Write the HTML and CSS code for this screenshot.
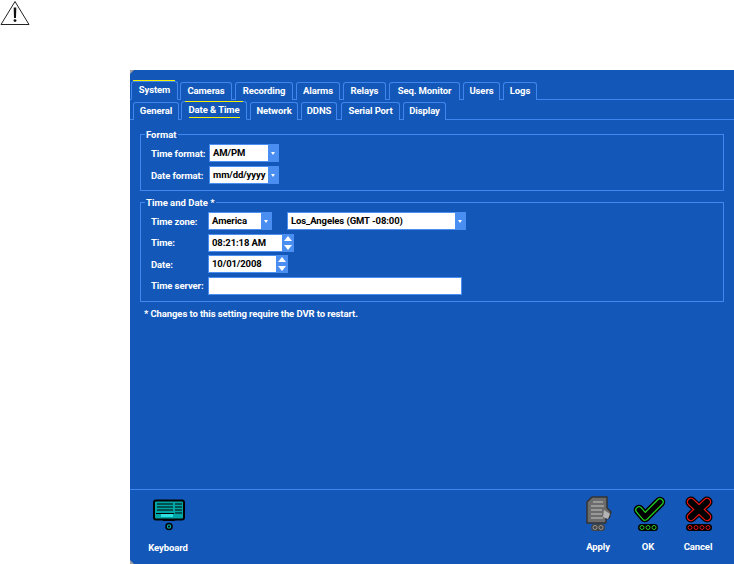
FILE: index.html
```html
<!DOCTYPE html>
<html lang="en">
<head>
<meta charset="utf-8">
<title>System - Date &amp; Time</title>
<link rel="stylesheet" href="styles.css">
</head>
<body>
<div class="notice">
  <svg class="warn" width="30" height="26" viewBox="0 0 30 26"><path d="M15 1.500 1 24.500h28z" fill="#fff" stroke="#222" stroke-width="1"/><path d="M14.300 8h1.400l-.3 9.500h-.8z" fill="#111" stroke="#111" stroke-width="1.200"/><circle cx="15" cy="20.600" r="1.400" fill="#111"/></svg>
</div>
<main class="panel">
  <nav class="tabs tabs-main">
    <a class="tab active t1">System</a>
    <a class="tab t2">Cameras</a>
    <a class="tab t3">Recording</a>
    <a class="tab t4">Alarms</a>
    <a class="tab t5">Relays</a>
    <a class="tab t6">Seq. Monitor</a>
    <a class="tab t7">Users</a>
    <a class="tab t8">Logs</a>
  </nav>
  <nav class="tabs tabs-sub">
    <a class="tab s1">General</a>
    <a class="tab active s2"><span class="under">Date &amp; Time</span></a>
    <a class="tab s3">Network</a>
    <a class="tab s4">DDNS</a>
    <a class="tab s5">Serial Port</a>
    <a class="tab s6">Display</a>
  </nav>
  <section class="content">
    <fieldset class="group group-format">
      <legend>Format</legend>
      <div class="row"><label>Time format:</label><div class="field w-time"><span class="val">AM/PM</span><span class="drop"></span></div></div>
      <div class="row"><label>Date format:</label><div class="field w-time"><span class="val">mm/dd/yyyy</span><span class="drop"></span></div></div>
    </fieldset>
    <fieldset class="group group-date">
      <legend>Time and Date *</legend>
      <div class="row alt"><label>Time zone:</label><div class="field w-zone"><span class="val">America</span><span class="drop"></span></div><div class="field w-city"><span class="val">Los_Angeles (GMT -08:00)</span><span class="drop"></span></div></div>
      <div class="row alt"><label>Time:</label><div class="field w-clock"><span class="val">08:21:18 AM</span><span class="spin"></span></div></div>
      <div class="row alt"><label>Date:</label><div class="field w-date"><span class="val">10/01/2008</span><span class="spin"></span></div></div>
      <div class="row alt"><label>Time server:</label><div class="field w-server"><span class="val"></span></div></div>
    </fieldset>
    <p class="note">* Changes to this setting require the DVR to restart.</p>
  </section>
  <footer class="footer">
    <div class="action act-key">
      <svg width="36" height="34" viewBox="0 0 36 34"><rect x="4" y="1.500" width="30" height="19" rx="2" fill="#00a5a5" stroke="#000" stroke-width="2"/><path d="M7 5h16M7 8h16M7 11h16M25 5h7M25 8h7M25 11h7M25 14h7" stroke="#000" stroke-width="1.200"/><rect x="11" y="15" width="12" height="3" fill="#2ee0e0"/><rect x="6" y="14" width="18" height="1" fill="#000"/><path d="M13 21h12" stroke="#000" stroke-width="2"/><circle cx="19" cy="27.500" r="3" fill="#00a5a5" stroke="#000" stroke-width="1.500"/><circle cx="19" cy="27.500" r="1" fill="#000"/></svg>
      <span>Keyboard</span>
    </div>
    <div class="actions">
      <div class="action">
        <svg width="36" height="36" viewBox="0 0 36 36"><path d="M7 7 12 2h15v11l4 4-2 6-3 1v4H7z" fill="#6c6c6c" stroke="#333" stroke-width="1.500" stroke-linejoin="round"/><path d="M13 7h10M11 11h13M11 15h11M11 19h11M11 23h12" stroke="#c4c4c4" stroke-width="1.100"/><path d="M24 15l6 4-2 5-5-2z" fill="#b4b4b4"/><rect x="11" y="29" width="14" height="7" rx="3.500" fill="#444"/><circle cx="15" cy="32.500" r="2" fill="#444" stroke="#999"/><circle cx="21" cy="32.500" r="2" fill="#444" stroke="#999"/></svg>
        <span>Apply</span>
      </div>
      <div class="action">
        <svg width="36" height="36" viewBox="0 0 36 36"><g fill="none" stroke-linejoin="round" stroke-linecap="round"><path d="M9 15l6 7L30 7" stroke="#000" stroke-width="10.500"/><path d="M9 15l6 7L30 7" stroke="#22d022" stroke-width="7.500"/><path d="M9 15l6 7L30 7" stroke="#000" stroke-width="5"/></g><rect x="8" y="29" width="20" height="7" rx="3.500" fill="#000"/><circle cx="12" cy="32.500" r="2" fill="#000" stroke="#2bc82b"/><circle cx="18" cy="32.500" r="2" fill="#000" stroke="#2bc82b"/><circle cx="24" cy="32.500" r="2" fill="#000" stroke="#2bc82b"/></svg>
        <span>OK</span>
      </div>
      <div class="action">
        <svg width="36" height="36" viewBox="0 0 36 36"><g fill="none" stroke-linecap="round"><path d="M11 7l16 15M27 7 11 22" stroke="#000" stroke-width="11"/><path d="M11 7l16 15M27 7 11 22" stroke="#f01414" stroke-width="8.500"/><path d="M11 7l16 15M27 7 11 22" stroke="#000" stroke-width="6"/></g><rect x="6" y="29" width="26" height="7" rx="3.500" fill="#000"/><circle cx="10" cy="32.500" r="2" fill="#000" stroke="#e01414"/><circle cx="16" cy="32.500" r="2" fill="#000" stroke="#e01414"/><circle cx="22" cy="32.500" r="2" fill="#000" stroke="#e01414"/><circle cx="28" cy="32.500" r="2" fill="#000" stroke="#e01414"/></svg>
        <span>Cancel</span>
      </div>
    </div>
  </footer>
</main>
</body>
</html>
```
FILE: styles.css
```css
* { box-sizing: border-box; }
html, body { margin: 0; padding: 0; background: #fff; }
body {
  width: 734px;
  height: 564px;
  overflow: hidden;
  font: bold 9.500px Roboto, "Liberation Sans", Arial, sans-serif;
  letter-spacing: -0.1px;
  color: #fff;
  white-space: nowrap;
}
.notice { height: 70px; }
.warn { display: block; }
.panel {
  position: relative;
  margin-left: 130px;
  width: 604px;
  height: 494px;
  background: #1358b8;
  display: flex;
  flex-direction: column;
  padding-top: 10px;
}
.panel::before, .panel::after {
  content: "";
  position: absolute;
  left: 0;
  width: 4px;
  height: 4px;
  background: #a0a0a0;
}
.panel::before { top: 0; clip-path: polygon(0 0, 100% 0, 0 100%); }
.panel::after { bottom: 0; clip-path: polygon(0 0, 100% 100%, 0 100%); }

.tabs {
  display: flex;
  align-items: flex-end;
  border-bottom: 1px solid #3f86ee;
  flex: none;
}
.tabs-main { height: 20px; padding-left: 1px; }
.tabs-sub { height: 20px; padding-left: 3px; }
.tab {
  height: 18px;
  margin-bottom: -1px;
  margin-right: 3px;
  border: 1px solid #3f86ee;
  border-bottom: 0;
  border-radius: 3px 3px 0 0;
  text-align: center;
  line-height: 16px;
  flex: none;
  background: #1358b8;
  position: relative;
}
.tab.active {
  height: 19px;
  border-bottom: 1px solid #1358b8;
}
.t1 { width: 47px; margin-right: 2px; }
.t2 { width: 52px; }
.t3 { width: 58px; }
.t4 { width: 44px; }
.t5 { width: 43px; }
.t6 { width: 71px; }
.t7 { width: 37px; }
.t8 { width: 34px; }
.s1 { width: 46px; margin-right: 2px; }
.s2 { width: 66px; }
.s3 { width: 48px; }
.s4 { width: 36px; margin-right: 4px; }
.s5 { width: 59px; }
.s6 { width: 43px; }
.tab.active::before {
  content: "";
  position: absolute;
  top: -2px;
  left: 1px;
  width: 42px;
  height: 1px;
  background: #f5f000;
}
.s2.active::before { left: 3px; width: 58px; top: -1px; }
.under { display: inline-block; line-height: 12px; padding-bottom: 1px; border-bottom: 1px solid #f5f000; }

.content { flex: 1; padding: 9px 10px 0; min-height: 0; }
.group {
  margin: 0 0 6px;
  padding: 0 0 0 10px;
  border: 1px solid #4189f0;
  min-width: 0;
}
.group legend {
  padding: 0 1px;
  margin-left: -6px;
  line-height: 11px;
  letter-spacing: 0;
}
.group-format { height: 62px; padding-top: 4px; }
.group-date { height: 105px; padding-top: 4px; }
.row {
  display: flex;
  align-items: center;
  height: 18px;
  margin-bottom: 4px;
}
.row label { width: 58px; flex: none; }
.row.alt { margin-bottom: 3.500px; }
.row.alt label { width: 57px; }
.field {
  display: flex;
  height: 18px;
  background: #4b8ef2;
  padding: 1px 0 1px 1px;
  flex: none;
}
.val {
  flex: 1;
  background: #fff;
  color: #000;
  padding-left: 3px;
  line-height: 16px;
}
.drop {
  width: 11px;
  position: relative;
  flex: none;
}
.drop::after {
  content: "";
  position: absolute;
  left: 3px;
  top: 7px;
  border: 2.500px solid transparent;
  border-top: 3px solid #fff;
  border-bottom: 0;
}
.spin {
  width: 12px;
  flex: none;
  position: relative;
}
.spin::before, .spin::after {
  content: "";
  position: absolute;
  left: 2px;
  border: 4px solid transparent;
}
.spin::before { top: 1px; border-bottom: 5px solid #fff; border-top: 0; }
.spin::after { bottom: 1px; border-top: 5px solid #fff; border-bottom: 0; }
.w-time { width: 70px; }
.w-zone { width: 64px; margin-right: 15px; }
.w-city { width: 179px; }
.w-clock { width: 86px; }
.w-date { width: 80px; }
.w-server { width: 254px; padding: 1px; }
.note { margin: 6px 0 0 4px; line-height: 11px; }

.footer {
  flex: none;
  height: 75px;
  border-top: 1px solid #3f86ee;
  display: flex;
  justify-content: space-between;
  padding: 5px 11px 0 13px;
}
.actions { display: flex; gap: 0; }
.action {
  width: 50px;
  display: flex;
  flex-direction: column;
  align-items: center;
}
.action svg { display: block; flex: none; }
.action span { margin-top: 10px; line-height: 11px; }
.act-key { margin-top: 4px; }
.act-key span { margin-top: 9px; }
```
